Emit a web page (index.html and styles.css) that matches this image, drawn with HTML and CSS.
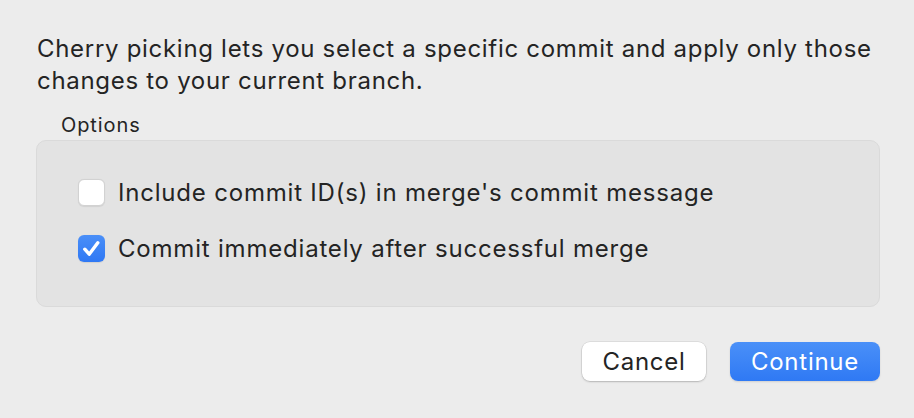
FILE: index.html
```html
<!DOCTYPE html>
<html lang="en">
<head>
<meta charset="utf-8">
<title>Cherry pick</title>
<link rel="stylesheet" href="styles.css">
</head>
<body>
<div class="dialog">
  <p class="intro">Cherry picking lets you select a specific commit and apply only those changes to your current branch.</p>
  <div class="group-label">Options</div>
  <div class="group">
    <label class="option">
      <span class="box"></span>
      <span class="text">Include commit ID(s) in merge's commit message</span>
    </label>
    <label class="option">
      <span class="box checked">
        <svg viewBox="0 0 27 27" width="27" height="27"><path d="M6.8 14.2 L11.2 19.2 L19.8 7.8" fill="none" stroke="#fff" stroke-width="3.4" stroke-linecap="round" stroke-linejoin="round"/></svg>
      </span>
      <span class="text">Commit immediately after successful merge</span>
    </label>
  </div>
  <div class="actions">
    <button class="btn cancel">Cancel</button>
    <button class="btn primary">Continue</button>
  </div>
</div>
</body>
</html>
```

FILE: styles.css
```css
html, body {
  margin: 0;
  padding: 0;
  background: #ececec;
  width: 914px;
  height: 418px;
  overflow: hidden;
}
.dialog {
  font-family: Inter, "Liberation Sans", Arial, sans-serif;
  color: #242424;
  padding: 33px 34px 0 36px;
  display: flex;
  flex-direction: column;
}
.intro {
  margin: 0 0 0 1px;
  font-size: 24px;
  letter-spacing: 0.7px;
  line-height: 32px;
  width: 850px;
}
.group-label {
  font-size: 20px;
  letter-spacing: 0.9px;
  line-height: 22px;
  margin: 17px 0 0 25px;
}
.group {
  margin-top: 4px;
  height: 167px;
  box-sizing: border-box;
  border: 1px solid #dadada;
  border-radius: 10px;
  background: #e3e3e3;
  padding: 38px 0 0 41px;
  display: flex;
  flex-direction: column;
  gap: 29px;
}
.option {
  display: flex;
  align-items: center;
  gap: 13px;
  height: 27px;
}
.box {
  width: 27px;
  height: 27px;
  box-sizing: border-box;
  border-radius: 6px;
  background: #fff;
  border: 1px solid #d2d2d2;
  box-shadow: 0 0.5px 1px rgba(0,0,0,0.08);
  display: flex;
}
.box.checked {
  border: none;
  background: linear-gradient(#4a8ff8, #2f78f4);
}
.text {
  font-size: 24px;
  letter-spacing: 0.8px;
  line-height: 27px;
}
.actions {
  display: flex;
  justify-content: flex-end;
  gap: 24px;
  margin-top: 35px;
}
.btn {
  font-family: Inter, "Liberation Sans", Arial, sans-serif;
  font-size: 24px;
  letter-spacing: 0.75px;
  height: 39px;
  border-radius: 8px;
  border: none;
  padding: 0;
}
.cancel {
  width: 124px;
  background: #fff;
  color: #242424;
  box-shadow: 0 0 0 0.5px rgba(0,0,0,0.12), 0 1px 2px rgba(0,0,0,0.18);
}
.primary {
  width: 150px;
  color: #fff;
  background: linear-gradient(#4a90f8, #2f79f4);
  box-shadow: 0 1px 2px rgba(0,0,0,0.12);
}
```
